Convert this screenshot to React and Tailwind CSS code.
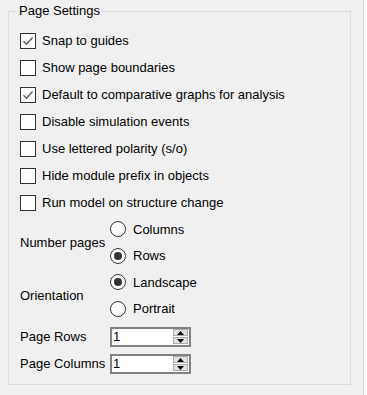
import React, { useState } from 'react'

const checks = [
  { label: 'Snap to guides', on: true },
  { label: 'Show page boundaries', on: false },
  { label: 'Default to comparative graphs for analysis', on: true },
  { label: 'Disable simulation events', on: false },
  { label: 'Use lettered polarity (s/o)', on: false },
  { label: 'Hide module prefix in objects', on: false },
  { label: 'Run model on structure change', on: false },
]

function Check({ on }) {
  return (
    <span className="w-4 h-4 border border-[#333333] bg-white flex items-center justify-center shrink-0">
      {on && (
        <svg width="12" height="12" viewBox="0 0 12 12">
          <path d="M1.5 6.2 L4.5 9.2 L10.5 2.5" fill="none" stroke="#555555" strokeWidth="1.3" />
        </svg>
      )}
    </span>
  )
}

function Radio({ on }) {
  return (
    <span className="w-4 h-4 rounded-full border border-[#333333] bg-white flex items-center justify-center shrink-0">
      {on && <span className="w-2 h-2 rounded-full bg-[#333333]" />}
    </span>
  )
}

function Spin({ value }) {
  return (
    <div className="w-[81px] h-[20px] border-2 border-[#828282] bg-white flex items-center">
      <span className="flex-1 pl-[1px] leading-none">{value}</span>
      <div className="flex flex-col gap-[1px] mr-[1px]">
        <span className="w-[15px] h-[7px] bg-[#e1e1e1] border border-[#adadad] flex items-center justify-center">
          <svg width="7" height="4" viewBox="0 0 7 4"><path d="M0 4 L3.5 0 L7 4 Z" fill="#000" /></svg>
        </span>
        <span className="w-[15px] h-[7px] bg-[#e1e1e1] border border-[#adadad] flex items-center justify-center">
          <svg width="7" height="4" viewBox="0 0 7 4"><path d="M0 0 L3.5 4 L7 0 Z" fill="#000" /></svg>
        </span>
      </div>
    </div>
  )
}

function RadioGroup({ label, options, value, onChange }) {
  return (
    <div className="flex items-center">
      <span className="w-[90px] shrink-0">{label}</span>
      <div className="flex flex-col">
        {options.map((o) => (
          <div key={o} className="h-[26.5px] flex items-center gap-[7px] cursor-default" onClick={() => onChange(o)}>
            <Radio on={value === o} />
            <span>{o}</span>
          </div>
        ))}
      </div>
    </div>
  )
}

export default function App() {
  const [numberPages, setNumberPages] = useState('Rows')
  const [orientation, setOrientation] = useState('Landscape')

  return (
    <div className="w-[367px] h-[395px] bg-[#f0f0f0] flex text-[13px] text-black" style={{ fontFamily: '"Liberation Sans", Arial, sans-serif' }}>
      <div className="w-[363px] pl-2 pt-[3px]">
        <fieldset className="w-[343px] h-[382px] border border-[#dcdcdc] px-[11px]">
          <legend className="ml-[-2px] px-[1px] leading-4">Page Settings</legend>
          <div className="pt-[8px] flex flex-col">
            {checks.map((c) => (
              <div key={c.label} className="h-[27px] flex items-center gap-[6px]">
                <Check on={c.on} />
                <span>{c.label}</span>
              </div>
            ))}
            <RadioGroup label="Number pages" options={['Columns', 'Rows']} value={numberPages} onChange={setNumberPages} />
            <RadioGroup label="Orientation" options={['Landscape', 'Portrait']} value={orientation} onChange={setOrientation} />
            <div className="h-[27px] flex items-center mt-[1px]">
              <span className="w-[90px] shrink-0">Page Rows</span>
              <Spin value="1" />
            </div>
            <div className="h-[27px] flex items-center">
              <span className="w-[90px] shrink-0">Page Columns</span>
              <Spin value="1" />
            </div>
          </div>
        </fieldset>
      </div>
      <div className="w-px bg-[#d9d9d9]" />
      <div className="flex-1 bg-[#fafafa]" />
    </div>
  )
}
